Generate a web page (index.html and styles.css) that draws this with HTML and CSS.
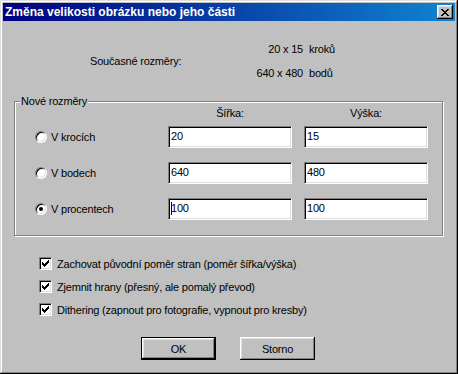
FILE: index.html
```html
<!DOCTYPE html>
<html lang="cs">
<head>
    <meta charset="UTF-8">
    <meta name="viewport" content="width=device-width, initial-scale=1.0">
    <title>Změna velikosti obrázku nebo jeho části</title>
    <link rel="stylesheet" href="styles.css">
</head>
<body>
    <div class="window">
        <div class="titlebar">
            <span class="title">Změna velikosti obrázku nebo jeho části</span>
            <span class="close-btn">
                <svg width="8" height="7" viewBox="0 0 8 7" shape-rendering="crispEdges">
                    <path d="M0 0h2v1h-2z M6 0h2v1h-2z M1 1h2v1h-2z M5 1h2v1h-2z M2 2h4v1h-4z M3 3h2v1h-2z M2 4h4v1h-4z M1 5h2v1h-2z M5 5h2v1h-2z M0 6h2v1h-2z M6 6h2v1h-2z" fill="#000"/>
                </svg>
            </span>
        </div>

        <div class="current">
            <div class="current-label">Současné rozměry:</div>
            <div class="num">20 x 15</div>
            <div class="unit">kroků</div>
            <div class="num">640 x 480</div>
            <div class="unit">bodů</div>
        </div>

        <div class="group">
            <div class="group-title">Nové rozměry</div>
            <div class="size-head">
                <div></div>
                <div class="col-head">Šířka:</div>
                <div class="col-head">Výška:</div>
            </div>
            <div class="size-grid">
                <div class="radio-row"><span class="radio"></span>V krocích</div>
                <div class="field">20</div>
                <div class="field">15</div>

                <div class="radio-row"><span class="radio"></span>V bodech</div>
                <div class="field">640</div>
                <div class="field">480</div>

                <div class="radio-row"><span class="radio checked"></span>V procentech</div>
                <div class="field"><span class="caret"></span>100</div>
                <div class="field">100</div>
            </div>
        </div>

        <div class="checks">
            <div class="check-row"><span class="checkbox"><svg width="7" height="7" viewBox="0 0 7 7" shape-rendering="crispEdges"><path d="M6 0h1v1h-1z M5 1h2v1h-2z M0 2h1v1h-1z M4 2h3v1h-3z M0 3h2v1h-2z M3 3h3v1h-3z M0 4h5v1h-5z M1 5h3v1h-3z M2 6h1v1h-1z" fill="#000"/></svg></span>Zachovat původní poměr stran (poměr šířka/výška)</div>
            <div class="check-row"><span class="checkbox"><svg width="7" height="7" viewBox="0 0 7 7" shape-rendering="crispEdges"><path d="M6 0h1v1h-1z M5 1h2v1h-2z M0 2h1v1h-1z M4 2h3v1h-3z M0 3h2v1h-2z M3 3h3v1h-3z M0 4h5v1h-5z M1 5h3v1h-3z M2 6h1v1h-1z" fill="#000"/></svg></span>Zjemnit hrany (přesný, ale pomalý převod)</div>
            <div class="check-row"><span class="checkbox"><svg width="7" height="7" viewBox="0 0 7 7" shape-rendering="crispEdges"><path d="M6 0h1v1h-1z M5 1h2v1h-2z M0 2h1v1h-1z M4 2h3v1h-3z M0 3h2v1h-2z M3 3h3v1h-3z M0 4h5v1h-5z M1 5h3v1h-3z M2 6h1v1h-1z" fill="#000"/></svg></span>Dithering (zapnout pro fotografie, vypnout pro kresby)</div>
        </div>

        <div class="buttons">
            <button class="btn default">OK</button>
            <button class="btn">Storno</button>
        </div>
    </div>
</body>
</html>
```

FILE: styles.css
```css
* {
    margin: 0;
    padding: 0;
    box-sizing: border-box;
}

body {
    font-family: 'Liberation Sans', Arial, sans-serif;
    font-size: 11px;
    letter-spacing: -0.2px;
    color: #000;
    background: #c0c0c0;
}

.window {
    width: 458px;
    height: 374px;
    padding: 3px;
    background: #c0c0c0;
    box-shadow: inset -1px -1px #000, inset 1px 1px #dfdfdf, inset -2px -2px #808080, inset 2px 2px #fff;
}

.titlebar {
    height: 18px;
    display: flex;
    align-items: center;
    justify-content: space-between;
    padding: 0 2px 0 2px;
    background: linear-gradient(to right, #000080, #1084d0);
}

.title {
    color: #fff;
    font-weight: bold;
    font-size: 12px;
    line-height: 14px;
    letter-spacing: 0;
}

.close-btn {
    width: 16px;
    height: 14px;
    display: flex;
    align-items: center;
    justify-content: center;
    background: #c0c0c0;
    box-shadow: inset -1px -1px #000, inset 1px 1px #fff, inset -2px -2px #808080, inset 2px 2px #dfdfdf;
}

.current {
    display: grid;
    grid-template-columns: 150px 57px auto;
    column-gap: 6px;
    row-gap: 10px;
    line-height: 14px;
    margin-top: 21px;
    padding-left: 87px;
}

.current-label {
    grid-row: 1 / 3;
    align-self: center;
}

.num {
    text-align: right;
}

.group {
    width: 429px;
    margin: 21px 0 0 11px;
    padding-bottom: 15px;
    border: 1px solid #808080;
    box-shadow: inset 1px 1px #fff, 1px 1px #fff;
}

.group-title {
    width: fit-content;
    margin: -8px 0 -6px 5px;
    padding: 0 1px;
    line-height: 14px;
    background: #c0c0c0;
}

.size-head,
.size-grid {
    display: grid;
    grid-template-columns: 141px 124px 124px;
    column-gap: 12px;
}

.size-head {
    padding-top: 4px;
    margin-bottom: 6px;
    line-height: 14px;
}

.col-head {
    text-align: center;
}

.size-grid {
    row-gap: 14px;
}

.radio-row {
    display: flex;
    align-items: center;
    gap: 4px;
    padding-left: 20px;
}

.radio {
    position: relative;
    width: 12px;
    height: 12px;
    border-radius: 50%;
    background: #fff;
    border: 1px solid;
    border-color: #808080 #fff #fff #808080;
    box-shadow: inset 1px 1px #000, inset -1px -1px #dfdfdf;
}

.radio.checked::after {
    content: "";
    position: absolute;
    left: 3px;
    top: 3px;
    width: 4px;
    height: 4px;
    border-radius: 50%;
    background: #000;
}

.field {
    height: 22px;
    line-height: 18px;
    padding-left: 2px;
    background: #fff;
    border: 1px solid;
    border-color: #808080 #fff #fff #808080;
    box-shadow: inset 1px 1px #000, inset -1px -1px #dfdfdf;
}

.caret {
    display: inline-block;
    width: 1px;
    height: 13px;
    margin-right: -1px;
    vertical-align: -3px;
    background: #000;
}

.checks {
    display: flex;
    flex-direction: column;
    gap: 10px;
    margin: 21px 0 0 36px;
}

.check-row {
    display: flex;
    align-items: center;
    gap: 5px;
    height: 13px;
}

.checkbox {
    width: 13px;
    height: 13px;
    display: flex;
    align-items: center;
    justify-content: center;
    background: #fff;
    border: 1px solid;
    border-color: #808080 #fff #fff #808080;
    box-shadow: inset 1px 1px #000, inset -1px -1px #dfdfdf;
}

.buttons {
    display: flex;
    gap: 24px;
    margin: 21px 0 0 138px;
}

.btn {
    width: 75px;
    height: 23px;
    font-family: inherit;
    font-size: 11px;
    letter-spacing: -0.2px;
    color: #000;
    background: #c0c0c0;
    border: none;
    box-shadow: inset -1px -1px #000, inset 1px 1px #fff, inset -2px -2px #808080, inset 2px 2px #dfdfdf;
}

.btn.default {
    border: 1px solid #000;
}
```
